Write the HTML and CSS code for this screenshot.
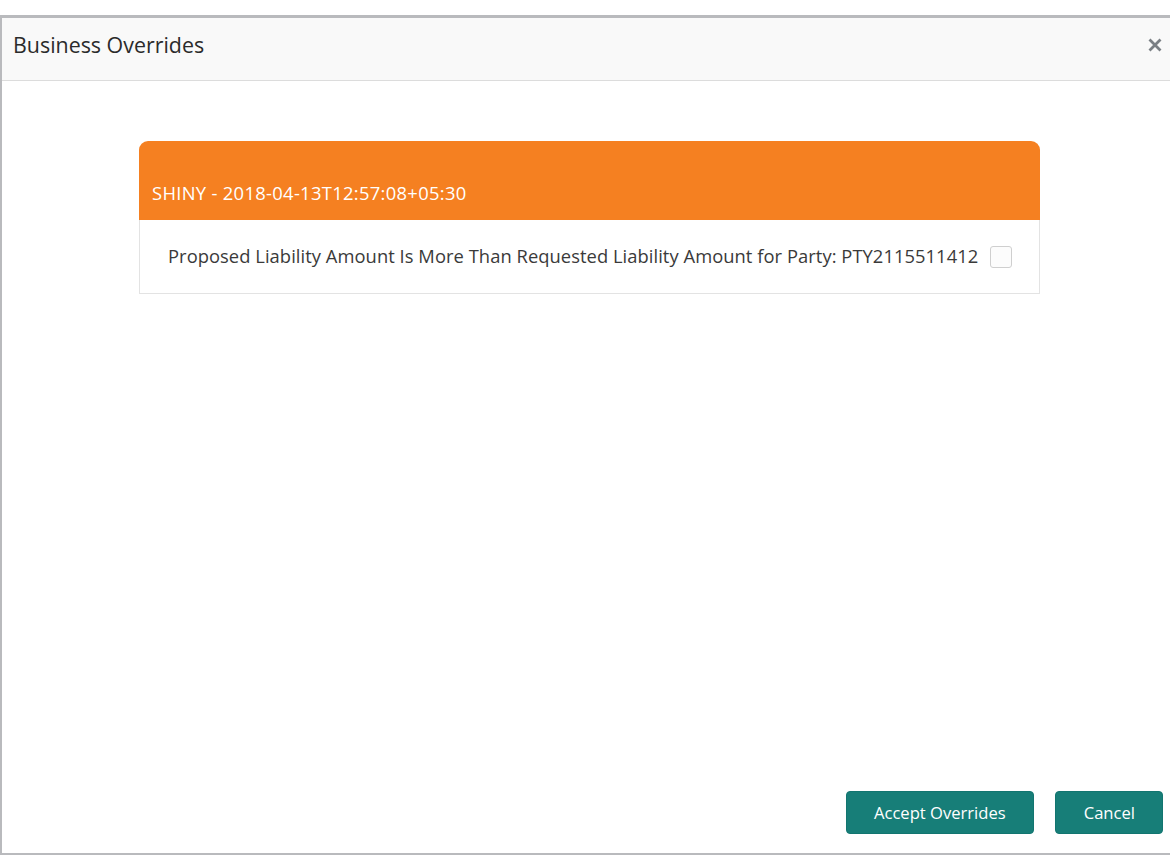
FILE: index.html
```html
<!DOCTYPE html>
<html>
<head>
<meta charset="utf-8">
<link rel="stylesheet" href="styles.css">
</head>
<body>
<div class="dialog">
  <div class="dialog-header">
    <h1 class="dialog-title">Business Overrides</h1>
    <button class="close-btn" aria-label="Close">
      <svg width="14" height="14" viewBox="0 0 14 14"><path d="M1.5 1.5 L12.5 12.5 M12.5 1.5 L1.5 12.5" stroke="#7a7f84" stroke-width="2.8" stroke-linecap="butt"/></svg>
    </button>
  </div>
  <div class="dialog-body">
    <div class="card">
      <div class="card-head">SHINY - 2018-04-13T12:57:08+05:30</div>
      <div class="card-row">
        <span class="row-text">Proposed Liability Amount Is More Than Requested Liability Amount for Party: PTY2115511412</span>
        <span class="checkbox"></span>
      </div>
    </div>
  </div>
  <div class="dialog-footer">
    <button class="btn">Accept Overrides</button>
    <button class="btn btn-cancel">Cancel</button>
  </div>
</div>
</body>
</html>
```
FILE: styles.css
```css
html, body {
  margin: 0;
  padding: 0;
  background: #ffffff;
  overflow: hidden;
}
body {
  font-family: "Open Sans", "Noto Sans", sans-serif;
  color: #333;
}
.dialog {
  margin-top: 15px;
  height: 840px;
  box-sizing: border-box;
  border-top: 3px solid #b9babd;
  border-left: 2px solid #b9babd;
  border-bottom: 2px solid #b9babd;
  display: flex;
  flex-direction: column;
}
.dialog-header {
  height: 63px;
  box-sizing: border-box;
  background: #f9f9f9;
  border-bottom: 1px solid #dcdcdc;
  display: flex;
  align-items: center;
  justify-content: space-between;
  padding: 0 8px 9px 11px;
  flex: none;
}
.dialog-title {
  margin: 0;
  font-size: 21.4px;
  font-weight: 400;
  color: #2b2b2b;
}
.close-btn {
  border: 0;
  background: transparent;
  padding: 0;
  width: 14px;
  height: 14px;
  display: flex;
}
.dialog-body {
  flex: 1;
  padding: 60px 0 0 137px;
}
.card {
  width: 901px;
}
.card-head {
  background: #f58021;
  color: #ffffff;
  height: 79px;
  box-sizing: border-box;
  border-radius: 9px 9px 0 0;
  padding: 39px 13px 0;
  font-size: 18.4px;
  letter-spacing: 0.3px;
}
.card-row {
  height: 74px;
  box-sizing: border-box;
  border: 1px solid #e3e3e3;
  border-top: 0;
  display: flex;
  align-items: center;
  padding: 0 10px 2px 28px;
  font-size: 18.35px;
  color: #3a3a3a;
}
.row-text {
  letter-spacing: 0.05px;
  white-space: nowrap;
}
.checkbox {
  flex: none;
  width: 20px;
  height: 20px;
  margin-left: 12px;
  margin-top: 2px;
  border: 1px solid #cfcfcf;
  border-radius: 3px;
  background: #fcfcfc;
}
.dialog-footer {
  display: flex;
  justify-content: flex-end;
  gap: 21px;
  padding: 0 7px 19px 0;
  flex: none;
}
.btn {
  height: 43px;
  border: 1px solid #127570;
  background: #177e78;
  color: #ffffff;
  border-radius: 4px;
  font-family: "Open Sans", "Noto Sans", sans-serif;
  font-size: 16.6px;
  padding: 0 27px;
}
.btn-cancel {
  padding: 0 27px 0 28px;
}
```
